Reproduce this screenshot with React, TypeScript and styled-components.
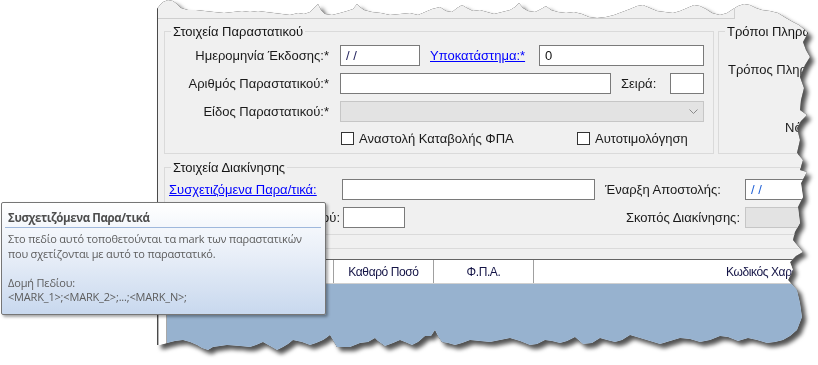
import React from 'react';
import styled, { createGlobalStyle } from 'styled-components';

const GlobalStyle = createGlobalStyle`
  html, body {
    margin: 0;
    padding: 0;
    background: #fff;
  }
  body {
    font-family: "Liberation Sans", Arial, sans-serif;
  }
`;

// torn edge of the screenshot, absolute page coords (x, y)
const TORN: [number, number][] = [
  [157, 9], [160, 5], [163, 2], [168, 0], [173, 1], [177, 4], [181, 8], [188, 10], [196, 10], [205, 11],
  [214, 12], [224, 13], [233, 12], [242, 11], [250, 12], [258, 11], [266, 12], [274, 13], [282, 14],
  [290, 15], [298, 13], [304, 14], [310, 12], [315, 7], [318, 4], [321, 10], [325, 14], [332, 15],
  [340, 13], [347, 11], [353, 9], [357, 4], [360, 7], [364, 10], [372, 12], [381, 13], [390, 15],
  [400, 14], [410, 13], [418, 15], [425, 12], [432, 9], [440, 7], [446, 11], [452, 12], [457, 8],
  [462, 5], [467, 8], [473, 11], [480, 10], [487, 12], [494, 14], [502, 12], [510, 10], [515, 7],
  [519, 3], [523, 8], [528, 11], [535, 12], [541, 9], [546, 6], [551, 10], [558, 12], [566, 13],
  [574, 12], [582, 14], [589, 17], [597, 18], [606, 17], [614, 15], [622, 12], [630, 9], [637, 6],
  [643, 5], [650, 8], [657, 11], [665, 12], [673, 13], [680, 11], [687, 8], [694, 5], [700, 6],
  [706, 9], [712, 13], [720, 15], [727, 13], [733, 9], [738, 6], [744, 4], [750, 5], [756, 8],
  [762, 10], [770, 11], [778, 13], [786, 18], [793, 22], [799, 25], [805, 30], [808, 33],
  [803, 42], [806, 50], [810, 57], [805, 65], [800, 77], [804, 88], [801, 100], [800, 110], [807, 115],
  [801, 121], [797, 128], [800, 140], [797, 153], [803, 160], [800, 170], [807, 172], [801, 183],
  [803, 197], [798, 207], [800, 223], [795, 232], [793, 240], [803, 252], [796, 256], [790, 262],
  [793, 270], [788, 280], [797, 290], [800, 303], [802, 317], [797, 330], [790, 336], [783, 340],
  [775, 342], [767, 343], [757, 340], [748, 338], [738, 341], [728, 337], [720, 336], [710, 340],
  [700, 342], [690, 339], [680, 338], [670, 341], [660, 344], [650, 341], [640, 338], [630, 335],
  [622, 340], [615, 342], [607, 340], [600, 338], [592, 343], [583, 344], [575, 337], [567, 341],
  [560, 343], [552, 341], [545, 340], [537, 344], [530, 345], [520, 341], [510, 338], [500, 340],
  [490, 342], [480, 341], [470, 340], [462, 343], [455, 345], [448, 343], [442, 342], [438, 336],
  [435, 330], [431, 336], [425, 336], [418, 342], [412, 345], [405, 342], [400, 340], [393, 343],
  [385, 346], [378, 341], [375, 338], [368, 342], [360, 343], [350, 347], [343, 347], [337, 347],
  [333, 340], [330, 335], [326, 338], [323, 340], [316, 343], [310, 345], [302, 342], [293, 340],
  [288, 344], [283, 347], [277, 350], [270, 346], [263, 342], [256, 345], [250, 347], [240, 346],
  [227, 345], [220, 346], [213, 347], [208, 350], [202, 348], [197, 345], [190, 342], [183, 340],
  [175, 341], [167, 343], [160, 345], [157, 345],
];

const WIN_X = 157;
const tornPolygon = TORN.map(([x, y]) => `${x - WIN_X}px ${y}px`).join(', ');

const Stage = styled.div`
  position: relative;
  width: 818px;
  height: 365px;
  overflow: hidden;
  background: #fff;
`;

const WindowShadow = styled.div`
  margin-left: ${WIN_X}px;
  width: 661px;
  height: 365px;
  filter: drop-shadow(0 0 0.6px rgba(0, 0, 0, 0.95)) drop-shadow(4px 4px 2px rgba(0, 0, 0, 0.68));
`;

const Window = styled.div`
  width: 661px;
  height: 365px;
  box-sizing: border-box;
  background: #f0f0f0;
  border-left: 1px solid #4a4a4a;
  clip-path: polygon(${tornPolygon});
  display: flex;
  flex-direction: column;
  font-size: 13px;
  color: #1a1a1a;
`;

const TopStrip = styled.div`
  height: 19px;
  flex: none;
`;

const TabEdge = styled.div`
  margin-top: 6px;
  width: 577px;
  height: 13px;
  box-sizing: border-box;
  border-right: 1px solid #cfcfcf;
  border-bottom: 1px solid #cfcfcf;
`;

const Body = styled.div`
  padding: 5px 0 0 6px;
  display: flex;
  flex-direction: column;
`;

const GroupRow = styled.div<{ $mt?: number }>`
  display: flex;
  gap: 4px;
  margin-top: ${p => p.$mt ?? 0}px;
`;

const Group = styled.fieldset<{ $width?: number }>`
  margin: 0;
  padding: 0;
  min-width: 0;
  flex: none;
  width: ${p => (p.$width ? `${p.$width}px` : 'auto')};
  box-sizing: border-box;
  border: 1px solid #dadada;
`;

const Legend = styled.legend`
  margin-left: 6px;
  padding: 0 2px;
  line-height: 15px;
  font-size: 13px;
  color: #151515;
`;

const Rows = styled.div<{ $pad: string }>`
  display: flex;
  flex-direction: column;
  gap: 7px;
  padding: ${p => p.$pad};
`;

const Row = styled.div`
  display: flex;
  align-items: center;
  height: 21px;
`;

const Label = styled.span<{ $w?: number; $right?: boolean; $ml?: number }>`
  flex: none;
  width: ${p => (p.$w ? `${p.$w}px` : 'auto')};
  margin-left: ${p => p.$ml ?? 0}px;
  text-align: ${p => (p.$right ? 'right' : 'left')};
  padding-right: ${p => (p.$right ? 2 : 0)}px;
  box-sizing: border-box;
  white-space: nowrap;
  line-height: 15px;
`;

const LinkLabel = styled.a<{ $ml?: number }>`
  flex: none;
  margin-left: ${p => p.$ml ?? 0}px;
  color: #0000ff;
  text-decoration: underline;
  white-space: nowrap;
  line-height: 15px;
  cursor: pointer;
`;

const TextBox = styled.div<{ $w?: number; $ml?: number; $auto?: boolean; $disabled?: boolean; $color?: string }>`
  flex: ${p => (p.$w ? 'none' : '1')};
  width: ${p => (p.$w ? `${p.$w}px` : 'auto')};
  margin-left: ${p => (p.$auto ? 'auto' : `${p.$ml ?? 0}px`)};
  height: 21px;
  box-sizing: border-box;
  border: 1px solid ${p => (p.$disabled ? '#c6c6c6' : '#7a7a7a')};
  background: ${p => (p.$disabled ? '#e3e3e3' : '#fff')};
  color: ${p => p.$color ?? '#111'};
  padding: 0 5px;
  display: flex;
  align-items: center;
  justify-content: space-between;
  white-space: nowrap;
  font-size: 13px;
`;

const Chevron = styled.svg`
  width: 9px;
  height: 6px;
`;

const CheckRow = styled.div`
  display: flex;
  align-items: center;
  height: 18px;
  padding-left: 176px;
`;

const CheckItem = styled.label<{ $w?: number }>`
  display: flex;
  align-items: center;
  gap: 5px;
  flex: none;
  width: ${p => (p.$w ? `${p.$w}px` : 'auto')};
  white-space: nowrap;
  line-height: 15px;
`;

const CheckBox = styled.span`
  width: 13px;
  height: 13px;
  box-sizing: border-box;
  border: 1px solid #333;
  background: #fff;
  flex: none;
`;

const SideCol = styled.div`
  display: flex;
  flex-direction: column;
  padding: 23px 0 18px 9px;
  white-space: nowrap;
  line-height: 15px;
`;

const SideLabel = styled.span<{ $mt?: number; $ml?: number }>`
  margin-top: ${p => p.$mt ?? 0}px;
  margin-left: ${p => p.$ml ?? 0}px;
`;

const MoveGrid = styled.div`
  display: grid;
  grid-template-columns: 173px 253px 147px 120px;
  row-gap: 7px;
  padding: 4px 0 6px 4px;
  align-items: center;
`;

const Cell = styled.div<{ $right?: boolean; $ml?: number }>`
  display: flex;
  justify-content: ${p => (p.$right ? 'flex-end' : 'flex-start')};
  padding-left: ${p => p.$ml ?? 0}px;
  padding-right: ${p => (p.$right ? 2 : 0)}px;
  white-space: nowrap;
  line-height: 15px;
`;

const Divider = styled.div`
  margin-top: 13px;
  height: 1px;
  background: #dadada;
`;

const GridArea = styled.div`
  margin: 10px 0 0 -6px;
  display: flex;
  height: 120px;
`;

const LeftStrip = styled.div`
  width: 9px;
  flex: none;
  box-sizing: border-box;
  background: #fff;
  border-left: 1px solid #b5b5b5;
  border-right: 1px solid #a8a8a8;
`;

const DataGrid = styled.div`
  flex: 1;
  display: flex;
  flex-direction: column;
  border-top: 1px solid #646464;
`;

const HeaderRow = styled.div`
  display: flex;
  height: 23px;
  background: #fff;
  border-bottom: 1px solid #d0d0d0;
`;

const HeaderCell = styled.div<{ $w?: number; $pl?: number }>`
  flex: ${p => (p.$w ? 'none' : '1')};
  width: ${p => (p.$w ? `${p.$w}px` : 'auto')};
  box-sizing: border-box;
  border-right: 1px solid #a0a0a0;
  display: flex;
  align-items: center;
  justify-content: ${p => (p.$pl ? 'flex-start' : 'center')};
  padding-left: ${p => p.$pl ?? 0}px;
  white-space: nowrap;
  font-size: 12px;
  letter-spacing: -0.4px;
  color: #141446;
`;

const GridBody = styled.div`
  flex: 1;
  background: #97b2cf;
`;

const Tooltip = styled.div`
  position: absolute;
  left: 1px;
  top: 202px;
  width: 325px;
  height: 113px;
  box-sizing: border-box;
  border: 1px solid #767676;
  border-radius: 2px;
  background: linear-gradient(180deg, #ffffff 0%, #e9eff8 45%, #c8d8ee 100%);
  box-shadow: 2px 2px 3px rgba(0, 0, 0, 0.35);
  padding: 7px 6px 0 6px;
  font-family: "Open Sans", "Noto Sans", sans-serif;
  color: #5c5c5c;
`;

const TipTitle = styled.div`
  font-weight: 700;
  font-size: 11.5px;
  letter-spacing: -0.4px;
  line-height: 15px;
  color: #4e4e4e;
  padding-bottom: 2px;
  margin: 0 -2px 0 -3px;
  padding-left: 3px;
  border-bottom: 1px solid #9fb8dc;
`;

const TipBody = styled.div`
  margin-top: 4px;
  font-size: 11px;
  letter-spacing: -0.18px;
  line-height: 14.5px;
  white-space: pre;
`;

export default function App() {
  return (
    <>
      <GlobalStyle />
      <Stage>
        <WindowShadow>
          <Window>
            <TopStrip>
              <TabEdge />
            </TopStrip>
            <Body>
              <GroupRow>
                <Group $width={550}>
                  <Legend>Στοιχεία Παραστατικού</Legend>
                  <Rows $pad="6px 9px 1px 0">
                    <Row>
                      <Label $w={166} $right>Ημερομηνία Έκδοσης:*</Label>
                      <TextBox $w={80} $ml={9} $color="#23235e">/ /</TextBox>
                      <LinkLabel $ml={10}>Υποκατάστημα:*</LinkLabel>
                      <TextBox $w={165} $auto>0</TextBox>
                    </Row>
                    <Row>
                      <Label $w={166} $right>Αριθμός Παραστατικού:*</Label>
                      <TextBox $w={271} $ml={9} />
                      <Label $ml={10}>Σειρά:</Label>
                      <TextBox $w={34} $auto />
                    </Row>
                    <Row>
                      <Label $w={166} $right>Είδος Παραστατικού:*</Label>
                      <TextBox $ml={9} $disabled>
                        <span />
                        <Chevron viewBox="0 0 9 6">
                          <polyline points="0.5,0.5 4.5,4.5 8.5,0.5" fill="none" stroke="#8a8a8a" strokeWidth="1" />
                        </Chevron>
                      </TextBox>
                    </Row>
                    <CheckRow>
                      <CheckItem $w={236}>
                        <CheckBox />
                        Αναστολή Καταβολής ΦΠΑ
                      </CheckItem>
                      <CheckItem>
                        <CheckBox />
                        Αυτοτιμολόγηση
                      </CheckItem>
                    </CheckRow>
                  </Rows>
                </Group>
                <Group $width={200}>
                  <Legend>Τρόποι Πληρωμής</Legend>
                  <SideCol>
                    <SideLabel>Τρόπος Πληρωμής:</SideLabel>
                    <SideLabel $mt={43} $ml={57}>Νόμισμα:</SideLabel>
                  </SideCol>
                </Group>
              </GroupRow>

              <GroupRow $mt={6}>
                <Group $width={700}>
                  <Legend>Στοιχεία Διακίνησης</Legend>
                  <MoveGrid>
                    <Cell>
                      <LinkLabel>Συσχετιζόμενα Παρα/τικά:</LinkLabel>
                    </Cell>
                    <TextBox $w={253} />
                    <Cell $ml={10}>Έναρξη Αποστολής:</Cell>
                    <TextBox $w={100} $ml={3} $color="#1d5fd6">/ /</TextBox>
                    <Cell $right>Αριθμός Οχήματος Μεταφορικού:</Cell>
                    <TextBox $w={62} $ml={1} />
                    <Cell $right>Σκοπός Διακίνησης:</Cell>
                    <TextBox $w={100} $ml={3} $disabled />
                  </MoveGrid>
                </Group>
              </GroupRow>

              <Divider />

              <GridArea>
                <LeftStrip />
                <DataGrid>
                  <HeaderRow>
                    <HeaderCell $w={167} />
                    <HeaderCell $w={100}>Καθαρό Ποσό</HeaderCell>
                    <HeaderCell $w={100}>Φ.Π.Α.</HeaderCell>
                    <HeaderCell $pl={192}>Κωδικός Χαρακτηρισμού</HeaderCell>
                  </HeaderRow>
                  <GridBody />
                </DataGrid>
              </GridArea>
            </Body>
          </Window>
        </WindowShadow>

        <Tooltip>
          <TipTitle>Συσχετιζόμενα Παρα/τικά</TipTitle>
          <TipBody>
            {'Στο πεδίο αυτό τοποθετούνται τα mark των παραστατικών\nπου σχετίζονται με αυτό το παραστατικό.\n\nΔομή Πεδίου:\n<MARK_1>;<MARK_2>;...;<MARK_N>;'}
          </TipBody>
        </Tooltip>
      </Stage>
    </>
  );
}
